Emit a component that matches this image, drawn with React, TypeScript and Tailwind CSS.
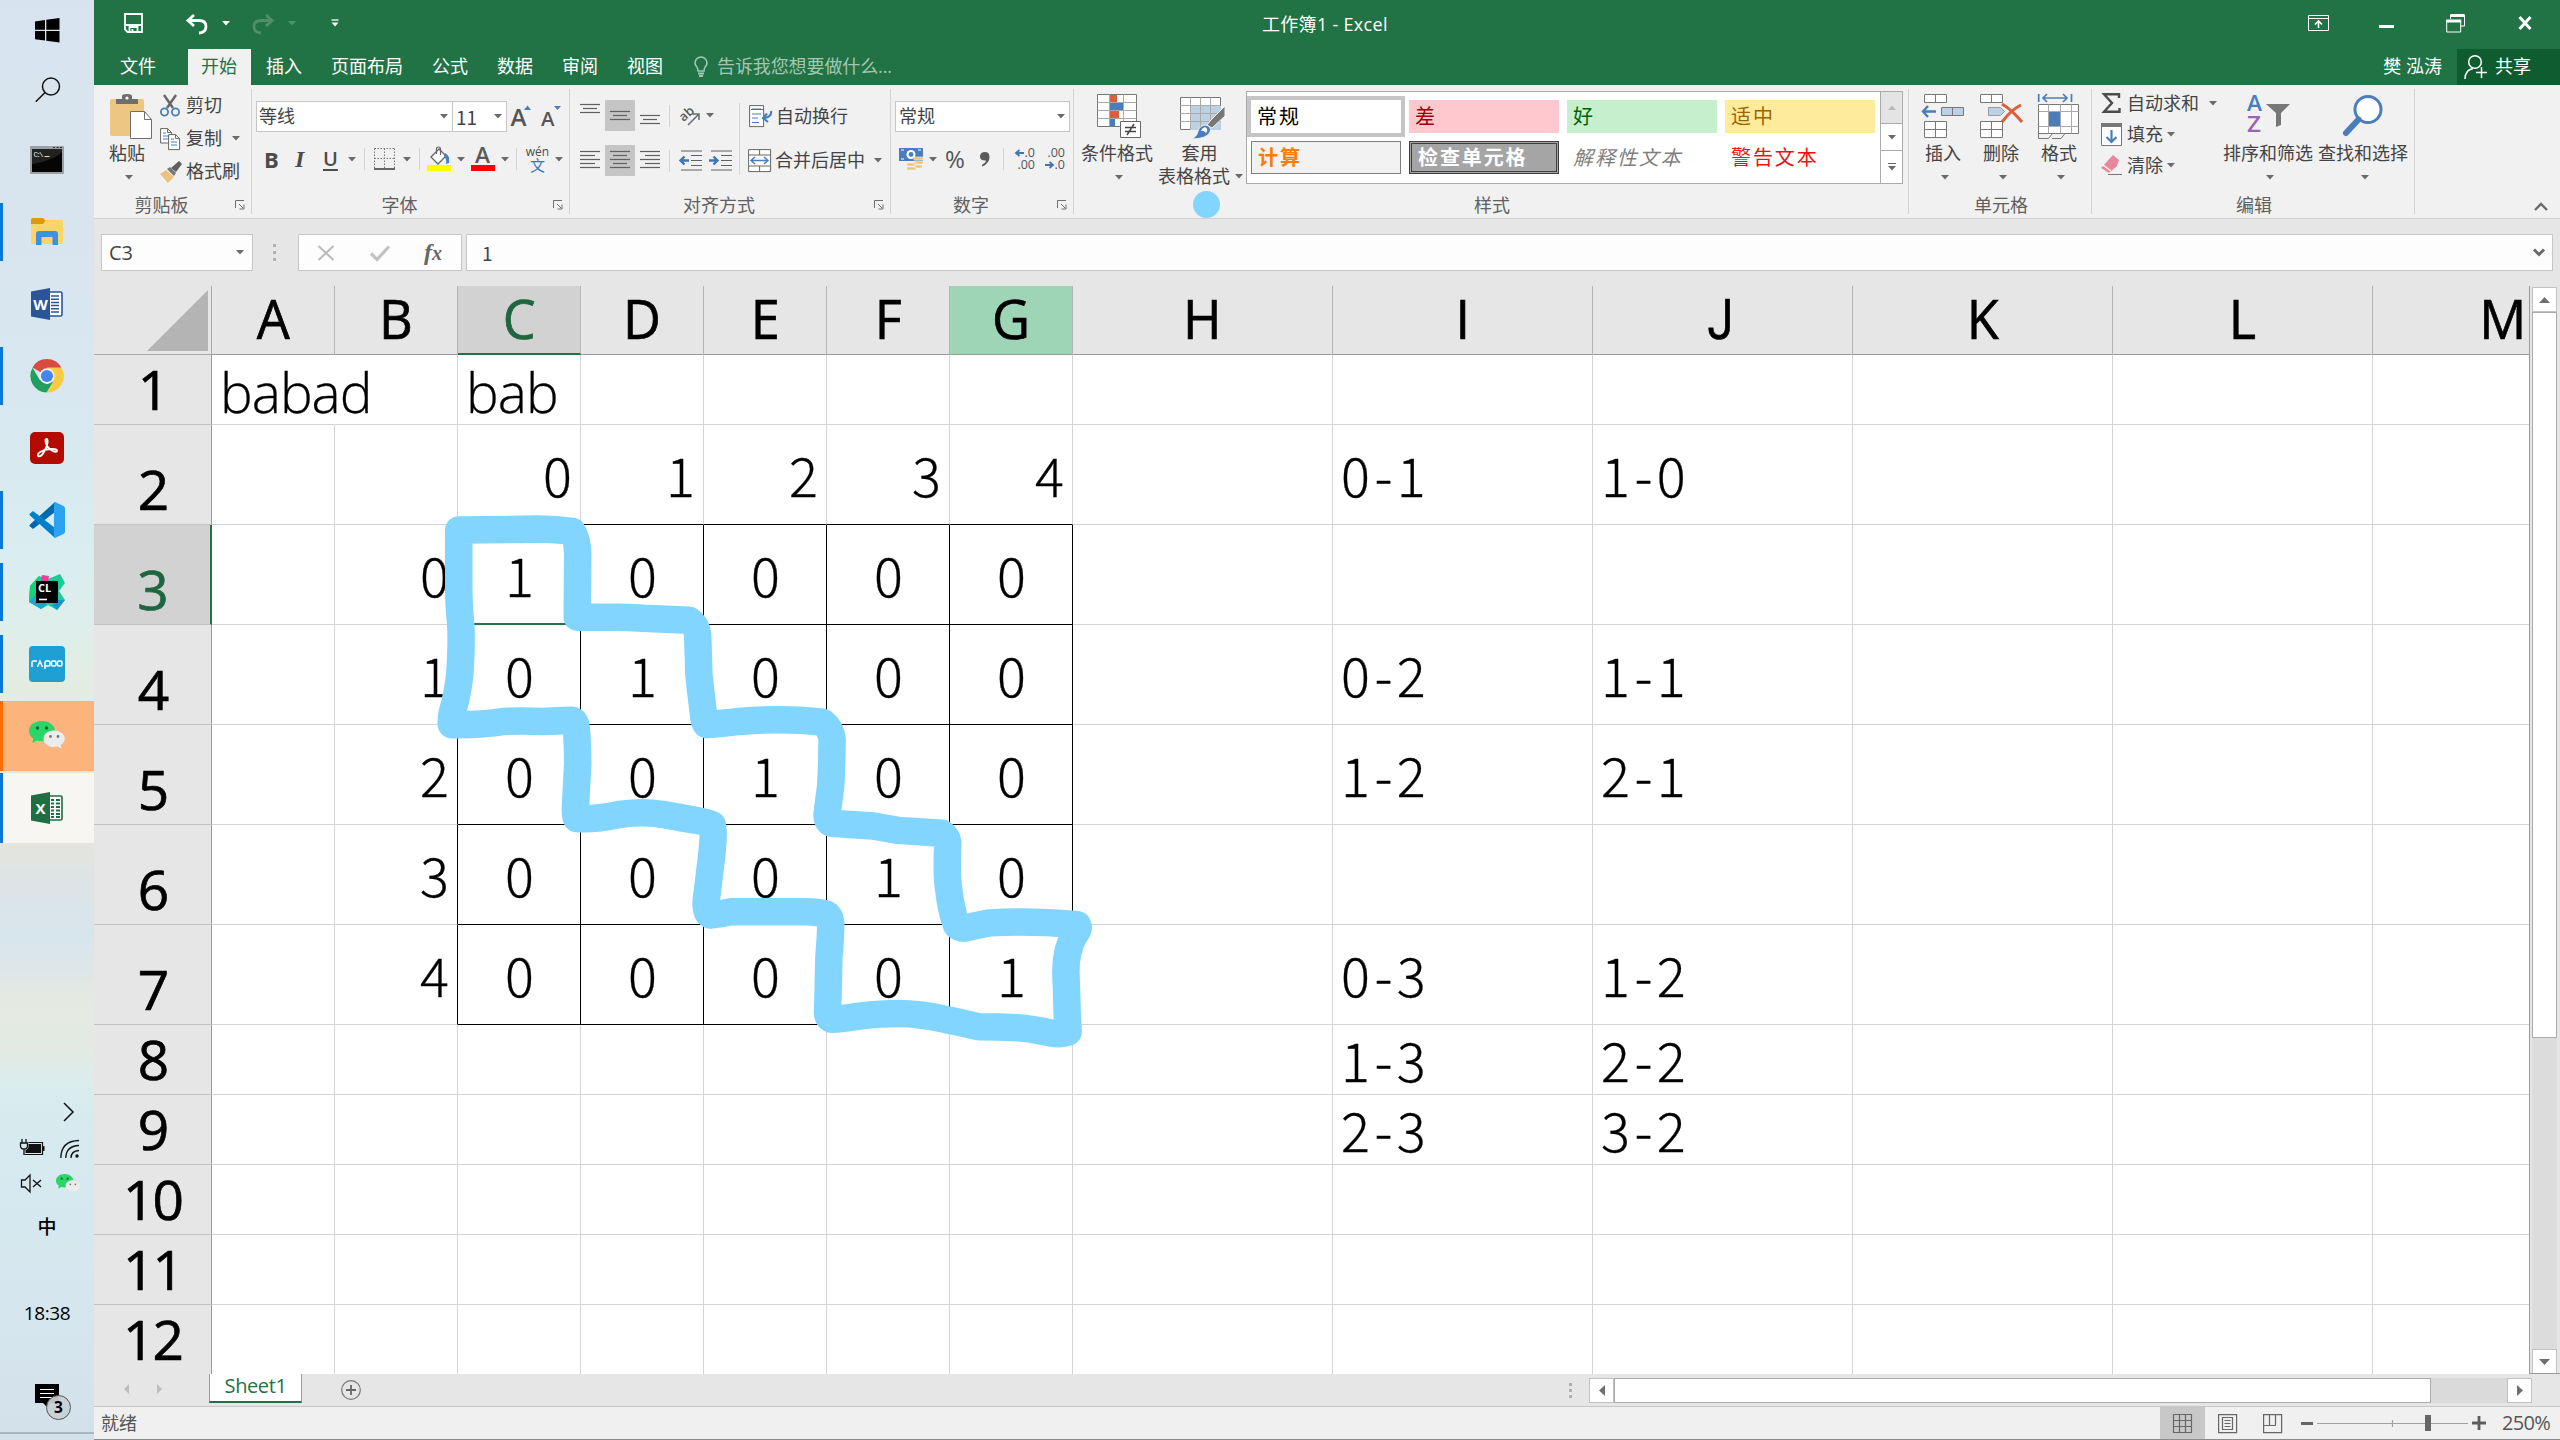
import React from "react";

type Kids = { children?: React.ReactNode; className?: string };

const Svg = ({ w, h, className = "", children }: { w: number; h: number } & Kids) => (
  <svg width={w} height={h} viewBox={`0 0 ${w} ${h}`} fill="none" className={`block shrink-0 overflow-visible ${className}`}>
    {children}
  </svg>
);

const Caret = ({ className = "", color = "#6a6a6a" }: { className?: string; color?: string }) => (
  <Svg w={8} h={5} className={className}>
    <path d="M0 0h8L4 4.6z" fill={color} />
  </Svg>
);

const Sep = ({ className = "" }: { className?: string }) => (
  <div className={`w-px shrink-0 bg-[#d4d4d4] ${className}`} />
);

const Launcher = () => (
  <Svg w={10} h={10}>
    <path d="M.5 8V.5H9M4 4l4 4M9 4.500V9H4.500" stroke="#6e6e6e" />
  </Svg>
);

function Group({ w, label, launcher, children }: { w: string; label: string; launcher?: boolean } & Kids) {
  return (
    <div className={`flex h-[133px] shrink-0 items-center ${w}`}>
      <div className="flex h-full min-w-0 grow flex-col">
        <div className="h-[107px]">{children}</div>
        <div className={`flex h-[26px] items-center text-[#606060] ${launcher ? "pr-[6px]" : ""}`}>
          <span className={`grow text-center leading-[25px] ${launcher ? "pr-[6px]" : "pl-[2px]"}`}>{label}</span>
          {launcher && <Launcher />}
        </div>
      </div>
      <div className="h-[125px] w-px bg-[#d2d2d2]" />
    </div>
  );
}

/* ---------- Task bar ---------- */

const WeChat = ({ w, h }: { w: number; h: number }) => (
  <svg width={w} height={h} viewBox="0 0 36 30" className="block shrink-0">
    <path d="M13 0C5.500 0 0 4.300 0 10c0 3.200 1.700 5.800 4.200 7.600L3.300 22l4.700-2.600c1.600.5 3.300.7 5 .7 7.200 0 13-4.300 13-10S20.500 0 13 0z" fill="#2bd568" />
    <path d="M25 9.500c-6 0-10.500 3.600-10.500 8.200S19 26 25 26c1.300 0 2.600-.2 3.800-.5l3.700 2.200-.8-3.700c2.500-1.500 4.100-3.700 4.100-6.300 0-4.600-4.800-8.200-10.800-8.200z" fill="#ececec" />
    <g fill="#0c6b33"><circle cx="8.500" cy="7" r="1.700" /><circle cx="17.500" cy="7" r="1.700" /></g>
    <g fill="#777"><circle cx="21.500" cy="15.500" r="1.400" /><circle cx="29" cy="15.500" r="1.400" /></g>
  </svg>
);

const Slot = ({ bar = "", bg = "", children }: { bar?: string; bg?: string } & Kids) => (
  <div className="flex h-[72px] w-[94px] shrink-0 items-center">
    <div className={`w-[3px] shrink-0 ${bg ? "h-[70px]" : "h-[58px]"} ${bar}`} />
    <div className={`flex h-[70px] grow items-center justify-center pr-[3px] ${bg}`}>{children}</div>
  </div>
);

const OfficeIcon = ({ letter, dark, light }: { letter: string; dark: string; light: string }) => (
  <Svg w={32} h={32}>
    <rect x="17" y="4" width="14" height="24" rx="1.500" fill="#fff" stroke={light} strokeWidth="1.600" />
    {letter === "W" ? (
      <path d="M20 8h8M20 11.200h8M20 14.400h8M20 17.600h8M20 20.800h8M20 24h8" stroke={light} strokeWidth="1.500" />
    ) : (
      <path d="M20 8h3M25 8h4M20 11.500h3M25 11.500h4M20 15h3M25 15h4M20 18.500h3M25 18.500h4M20 22h3M25 22h4M20 25h3M25 25h4" stroke={light} strokeWidth="2" />
    )}
    <path d="M0 3.500L19 0v32L0 28.500z" fill={dark} />
    <text x="9.500" y="21.500" textAnchor="middle" fontSize="15" fontWeight="700" fill="#fff" fontFamily="Open Sans, sans-serif">{letter}</text>
  </Svg>
);

function TaskBar() {
  return (
    <div className="flex h-[1440px] w-[94px] shrink-0 flex-col overflow-hidden bg-[linear-gradient(180deg,#d7e3ee_0px,#d9e5ee_200px,#d8e7f0_400px,#d9edf1_540px,#dfeee9_640px,#e4ece0_700px,#e4e4df_843px,#dce4e6_890px,#d6e5ed_935px,#e6e9e2_1005px,#e2eae3_1050px,#d9edee_1090px,#d6eaf0_1140px,#d6e6ee_1300px,#d2e0ea_1440px)]">
      <div className="h-[60px] pl-[35px] pt-[18px]">
        <Svg w={25} h={25}>
          <path d="M0 3.500L10 2v9.700H0zM11.300 1.800L24.500 0v11.700H11.300zM0 13h10v9.600L0 21.200zM11.300 13h13.200v11.500l-13.200-1.800z" fill="#000" />
        </Svg>
      </div>
      <div className="h-[64px] pl-[35px] pt-[17px]">
        <Svg w={26} h={26}>
          <circle cx="16" cy="9.500" r="8.500" stroke="#111" strokeWidth="1.500" />
          <path d="M10 15.500L.8 24.700" stroke="#111" strokeWidth="1.500" />
        </Svg>
      </div>
      <Slot>
        <Svg w={34} h={28}>
          <rect width="34" height="28" rx="1" fill="#9aa0a4" />
          <path d="M2 3h30v23H2z" fill="#050505" />
          <path d="M2 18C14 16 26 12 32 6V3H2z" fill="#222" />
          <path d="M23 1.500h2M26.500 1.500h2M30 1.500h2" stroke="#333" />
          <path d="M14.500 10.500h5" stroke="#ddd" />
          <text x="3.500" y="10.500" fontSize="7.500" fill="#e8e8e8" fontFamily="Liberation Mono, monospace" textLength="10">C:\</text>
        </Svg>
      </Slot>
      <Slot bar="bg-[#0b77d8]">
        <Svg w={32} h={28}>
          <path d="M0 2a2 2 0 012-2h10l3 3v3H0z" fill="#d99a0f" />
          <path d="M0 6h12l3-4h15a2 2 0 012 2v20a2 2 0 01-2 2H2a2 2 0 01-2-2z" fill="#fdd565" />
          <path d="M5 27V16a3 3 0 013-3h16a3 3 0 013 3v11h-5.500v-8h-11v8z" fill="#3b93d9" />
        </Svg>
      </Slot>
      <Slot><OfficeIcon letter="W" dark="#2a5699" light="#2a5699" /></Slot>
      <Slot bar="bg-[#0b77d8]">
        <Svg w={34} h={34}>
          <path d="M17 17L2.500 8.500A16.500 16.500 0 0131.400 8.700L17 8.700z" fill="#db4a3f" />
          <path d="M31.400 8.700A16.500 16.500 0 0116.500 33.500L24 21 17 8.700z" fill="#fcca3f" />
          <path d="M16.500 33.500A16.500 16.500 0 012.600 8.700L9.800 21 17 25l6.500-3z" fill="#1fa15d" />
          <circle cx="17" cy="17" r="7.700" fill="#f4f4f4" />
          <circle cx="17" cy="17" r="6.100" fill="#4684ee" />
        </Svg>
      </Slot>
      <Slot>
        <Svg w={34} h={33}>
          <rect width="34" height="32" rx="5" fill="#b30b00" />
          <path d="M8 22.500c0-2 5-4.300 10-5.200 5-.9 9.500 0 9 1.700-.6 2-6.500.1-9.500-4.500-2.200-3.400-2.600-7.500-1-7.600 2-.1 1.200 6-1.500 11.100-2 3.900-4.300 6.500-5.900 6.400-.7 0-1.100-.8-1.100-1.900z" stroke="#fff" strokeWidth="1.900" />
        </Svg>
      </Slot>
      <Slot bar="bg-[#0b77d8]">
        <Svg w={36} h={36}>
          <path d="M26 0v10L4 27l-3-2.500q-1-1 0-2z" fill="#0068ad" />
          <path d="M26 36V26L4 9l-3 2.500q-1 1 0 2z" fill="#0080cc" />
          <path d="M26 0l8.500 4q1.500.8 1.500 2.400v23.200q0 1.600-1.500 2.400L26 36l-1-1.500v-33z" fill="#2ba3f0" />
        </Svg>
      </Slot>
      <Slot bar="bg-[#0b77d8]">
        <Svg w={36} h={36}>
          <path d="M1 12l9-10 9 3 12-5 5 9-6 8 6 9-8 10-9-5-7 4L0 28z" fill="#20c997" />
          <path d="M1 12l9-10 2 18L0 28z" fill="#18d078" />
          <path d="M0 28l7-8 11 11-6 4z" fill="#18a5d8" />
          <path d="M13 1l7 1-1 6-7-1z" fill="#e83fa0" />
          <path d="M30 26l6 0-8 10-5-5z" fill="#0e9ad0" />
          <rect x="7" y="7" width="22" height="22" fill="#000" />
          <path d="M10 25.500h8" stroke="#fff" strokeWidth="1.600" />
          <text x="9" y="17.500" fontSize="11" fontWeight="700" fill="#fff" fontFamily="Open Sans, sans-serif">CL</text>
        </Svg>
      </Slot>
      <Slot bar="bg-[#0b77d8]">
        <div className="flex h-[36px] w-[36px] items-center justify-center rounded-[4px] bg-[#1fa0d3]">
          <svg width="32" height="12" viewBox="0 0 32 12" fill="none" stroke="#fff" strokeWidth="1.500">
            <path d="M1 9V4.500Q1 3 2.500 3H6M6.500 9L9 3.200 11.500 9M14 11V4.500Q14 3 15.500 3h2Q19 3 19 4.500v2Q19 8 17.500 8H14" />
            <rect x="20.500" y="3" width="4.500" height="5" rx="1.600" /><rect x="26.500" y="3" width="4.500" height="5" rx="1.600" />
          </svg>
        </div>
      </Slot>
      <Slot bar="bg-[#ff6d00]" bg="bg-[#fab47c]"><WeChat w={36} h={32} /></Slot>
      <Slot bar="bg-[#0b77d8]" bg="bg-[#f8f6f2]"><OfficeIcon letter="X" dark="#1e6e42" light="#1e6e42" /></Slot>
      <div className="mt-[258px] flex h-[20px] justify-end pr-[20px]">
        <Svg w={11} h={20}><path d="M1 1l9 9-9 9" stroke="#111" strokeWidth="1.500" /></Svg>
      </div>
      <div className="mt-[17px] flex h-[20px] gap-[15px] pl-[20px]">
        <Svg w={25} h={20}>
          <path d="M2 0v4M6 0v4M.5 4h7v3q0 3-3.500 3T.5 7zM4 10v6" stroke="#111" strokeWidth="1.300" />
          <path d="M8.500 3.500h14v12h-18" stroke="#111" strokeWidth="1.200" />
          <path d="M8.500 5H21v9H5.500v-3q3-1 3-4zM23 7h1.500v5H23z" fill="#111" />
        </Svg>
        <Svg w={20} h={20}>
          <path d="M.8 19Q1 2 19 1.500M5.800 19Q6 7 19 6.500M11 19Q11 12 19 11.500" stroke="#111" strokeWidth="1.300" />
          <circle cx="17" cy="17" r="1.700" fill="#111" />
        </Svg>
      </div>
      <div className="mt-[15px] flex h-[20px] gap-[14px] pl-[20px]">
        <Svg w={22} h={20}>
          <path d="M1.500 6H5l5-5v17l-5-5H1.500zM13 6l8 7M21 6l-8 7" stroke="#111" strokeWidth="1.300" />
        </Svg>
        <WeChat w={24} h={20} />
      </div>
      <div className="mt-[21px] h-[24px] text-center text-[19px] font-medium leading-[24px] text-black">中</div>
      <div className="mt-[62px] h-[24px] text-center text-[19px] leading-[24px] tracking-[-0.4px] text-black">18:38</div>
      <div className="mt-[59px] flex h-[40px] pl-[35px]">
        <Svg w={38} h={38}>
          <path d="M0 0h24v19H15l-2 5-5-5H0z" fill="#000" />
          <path d="M5 5.500h14M5 9.500h14M5 13.500h14" stroke="#fff" strokeWidth="1.200" />
          <circle cx="23.500" cy="23.500" r="12" fill="#c9d0d5" fillOpacity=".93" stroke="#555" />
          <text x="23.500" y="29" textAnchor="middle" fontSize="15.500" fontWeight="700" fill="#000" fontFamily="Open Sans, sans-serif">3</text>
        </Svg>
      </div>
      <div className="mt-[8px] h-[2px] bg-[#a9b6bf]" />
    </div>
  );
}

/* ---------- Title bar and tabs ---------- */

function TitleBar() {
  return (
    <div className="flex h-[49px] items-start text-white">
      <Svg w={19} h={20} className="ml-[30px] mt-[13px]">
        <path d="M1 1h17v18H3.500L1 16.500z" stroke="#fff" strokeWidth="1.800" />
        <path d="M1 12h17M5.500 19v-5h8v5M8.500 16v3" stroke="#fff" strokeWidth="1.800" />
      </Svg>
      <Svg w={22} h={20} className="ml-[43px] mt-[14px]">
        <path d="M8 1L2 6.500 8 12M2 6.500h11q7 0 7 6 0 6-7 6.500" stroke="#fff" strokeWidth="2.800" />
      </Svg>
      <Caret className="ml-[14px] mt-[21px]" color="#fff" />
      <Svg w={22} h={20} className="ml-[22px] mt-[14px]">
        <path d="M14 1l6 5.500L14 12M20 6.500H9q-7 0-7 6 0 6 7 6.500" stroke="#4f906b" strokeWidth="2.800" />
      </Svg>
      <Caret className="ml-[14px] mt-[21px]" color="#4f906b" />
      <Svg w={8} h={8} className="ml-[35px] mt-[19px]">
        <path d="M.500 1h7" stroke="#fff" strokeWidth="1.300" /><path d="M.500 3.500h7L4 7.500z" fill="#fff" />
      </Svg>
      <div className="ml-[923px] w-[128px] whitespace-nowrap text-[18px] leading-[49px] tracking-[0.3px]">工作簿1 - Excel</div>
      <Svg w={21} h={16} className="ml-[918px] mt-[15px]">
        <path d="M.5.500h20v15H.5zM.5 3.500h20" stroke="#fff" /><path d="M10.500 13V6M7 9.500L10.500 6 14 9.500" stroke="#fff" strokeWidth="1.600" />
      </Svg>
      <div className="ml-[50px] mt-[25px] h-[3px] w-[15px] bg-white" />
      <Svg w={20} h={19} className="ml-[52px] mt-[14px]">
        <path d="M4.500 5V1h14v11h-4" stroke="#fff" /><path d="M4.500 1.500h14" stroke="#fff" strokeWidth="3" />
        <path d="M.700 6.500h14V18H.7z" stroke="#fff" /><path d="M.2 7h15" stroke="#fff" strokeWidth="3" />
      </Svg>
      <Svg w={14} h={14} className="ml-[52px] mt-[16px]">
        <path d="M1.500 1l11 12M12.500 1l-11 12" stroke="#fff" strokeWidth="3" />
      </Svg>
    </div>
  );
}

function Tabs() {
  return (
    <div className="flex h-[36px] items-stretch whitespace-nowrap leading-[34px] text-white">
      <div className="w-[94px] pl-[26px]">文件</div>
      <div className="w-[63px] bg-[#f1f1f1] pl-[13px] text-[#217346]">开始</div>
      <div className="w-[65px] pl-[15px]">插入</div>
      <div className="w-[101px] pl-[15px]">页面布局</div>
      <div className="w-[65px] pl-[15px]">公式</div>
      <div className="w-[65px] pl-[15px]">数据</div>
      <div className="w-[65px] pl-[15px]">审阅</div>
      <div className="w-[65px] pl-[15px]">视图</div>
      <Svg w={14} h={22} className="ml-[17px] mt-[7px]">
        <path d="M4 15q0-3-1.500-4.500Q1 8.700 1 7a6 6 0 0112 0q0 1.700-1.500 3.500Q10 12 10 15z" stroke="#a3c7b2" strokeWidth="1.600" />
        <path d="M4 17.500h6M5 20h4" stroke="#a3c7b2" strokeWidth="2" />
      </Svg>
      <div className="ml-[9px] tracking-[-0.1px] text-[#a3c7b2]">告诉我您想要做什么...</div>
      <div className="ml-auto mr-[15px]">樊 泓涛</div>
      <div className="flex w-[103px] bg-[#0e5c2f] pl-[7px]">
        <Svg w={24} h={26} className="mt-[5px]">
          <circle cx="11" cy="8" r="6.300" stroke="#fff" strokeWidth="1.500" />
          <path d="M1 25q0-9 8-10.500M12 18.500h11M17.500 13v11" stroke="#fff" strokeWidth="1.500" />
        </Svg>
        <span className="ml-[7px]">共享</span>
      </div>
    </div>
  );
}

/* ---------- Ribbon ---------- */

const Lines = ({ rows, w = 20 }: { rows: [number, number][]; w?: number }) => (
  <Svg w={w} h={rows.length * 4 + (rows.length > 3 ? 1 : 0)}>
    {rows.map(([x, len], i) => (
      <path key={i} d={`M${x} ${i * 4 + 1.500}h${len}`} stroke="#606060" strokeWidth="1.200" />
    ))}
  </Svg>
);
const LEFT: [number, number][] = [[0, 20], [0, 15], [0, 20], [0, 15], [0, 20]];
const MID: [number, number][] = [[0, 20], [3, 14], [0, 20], [3, 14], [0, 20]];
const RIGHT: [number, number][] = [[0, 20], [5, 15], [0, 20], [5, 15], [0, 20]];
const THREE: [number, number][] = [[0, 20], [3, 14], [0, 20]];

function ClipboardGroup() {
  return (
    <Group w="w-[158px]" label="剪贴板" launcher>
      <div className="flex">
        <div className="flex w-[66px] flex-col items-center pt-[9px]">
          <Svg w={42} h={45} className="ml-[8px]">
            <rect y="5" width="34" height="37" rx="2" fill="#edc682" />
            <path d="M6 10V5h6V2q0-2 5-2t5 2v3h6v5z" fill="#6e6e6e" /><circle cx="17" cy="4" r="1.600" fill="#fff" />
            <path d="M20.500 17.500h14l7 8v19h-21z" fill="#fff" stroke="#6e6e6e" /><path d="M34.500 17.500v8h7" stroke="#6e6e6e" />
          </Svg>
          <div className="mt-[2px] leading-[24px]">粘贴</div>
          <Caret className="ml-[4px] mt-[10px]" />
        </div>
        <div className="flex flex-col pt-[4px]">
          <div className="flex h-[33px] items-center">
            <Svg w={20} h={22}>
              <path d="M4 0l9 13M16 0L7 13" stroke="#666" strokeWidth="2.400" />
              <circle cx="4.500" cy="17" r="3.600" stroke="#4a7ebb" strokeWidth="1.800" /><circle cx="15.500" cy="17" r="3.600" stroke="#4a7ebb" strokeWidth="1.800" />
            </Svg>
            <span className="ml-[6px]">剪切</span>
          </div>
          <div className="flex h-[33px] items-center">
            <Svg w={20} h={22}>
              <path d="M.600.600h7l4 4V15H.6z" fill="#fff" stroke="#666" /><path d="M7.600.600v4h4" stroke="#666" /><path d="M3 5h3M3 8h6M3 11h6" stroke="#4a7ebb" />
              <path d="M8.600 6.600h7l4 4v11h-11z" fill="#fff" stroke="#666" /><path d="M15.600 6.600v4h4" stroke="#666" /><path d="M11 11h3M11 14h6M11 17h6" stroke="#4a7ebb" />
            </Svg>
            <span className="ml-[6px]">复制</span>
            <Caret className="ml-[10px]" />
          </div>
          <div className="flex h-[33px] items-center">
            <Svg w={22} h={22}>
              <path d="M0 13l6-4 8 7-6 6z" fill="#edc27f" /><path d="M7 8l3-2 6 6-2 3z" fill="#777" /><path d="M11 7l8-7 3 3-6 8z" fill="#5f5f5f" />
            </Svg>
            <span className="ml-[4px]">格式刷</span>
          </div>
        </div>
      </div>
    </Group>
  );
}

function FontGroup() {
  return (
    <Group w="w-[318px]" label="字体" launcher>
      <div className="pl-[4px] pt-[16px]">
        <div className="flex h-[31px]">
          <div className="flex w-[197px] items-center border border-[#c6c6c6] bg-white pl-[2px] pr-[4px]">
            <span className="grow">等线</span><Caret />
          </div>
          <div className="-ml-px flex w-[55px] items-center border border-[#c6c6c6] bg-white pl-[3px] pr-[4px]">
            <span className="grow font-['Noto_Sans_CJK_SC'] text-[19px] leading-[26px]">11</span><Caret />
          </div>
          <Svg w={20} h={22} className="ml-[4px] mt-[4px]">
            <text x="-.500" y="21" fontSize="23" fontWeight="600" fill="#555" textLength="16" lengthAdjust="spacingAndGlyphs">A</text>
            <path d="M13 5h7l-3.500-4.500z" fill="#4a7ebb" />
          </Svg>
          <Svg w={20} h={22} className="ml-[10px] mt-[4px]">
            <text x="0" y="21" fontSize="19" fontWeight="600" fill="#555" textLength="13.500" lengthAdjust="spacingAndGlyphs">A</text>
            <path d="M13 1h7l-3.500 4z" fill="#4a7ebb" />
          </Svg>
        </div>
        <div className="mt-[10px] flex h-[34px] items-center text-[#4c4c4c]">
          <span className="w-[28px] pl-[8px] text-[22px] font-bold leading-[34px]">B</span>
          <span className="w-[28px] pl-[11px] font-['Liberation_Serif'] text-[24px] font-bold italic leading-[34px]">I</span>
          <span className="w-[32px] pl-[11px] text-[20px] font-semibold leading-[30px] underline underline-offset-[3px]">U</span>
          <Caret className="ml-[4px]" />
          <Sep className="ml-[8px] h-[22px]" />
          <Svg w={21} h={22} className="ml-[9px]">
            <path d="M.500.500h20M.5 10.500h20M.5.500v20M10.500.500v20M20.500.500v20" stroke="#777" strokeDasharray="1.500 1.500" fill="none" /><path d="M0 21h21" stroke="#444" strokeWidth="1.600" />
          </Svg>
          <Caret className="ml-[8px]" />
          <Sep className="ml-[8px] h-[22px]" />
          <Svg w={24} h={24} className="ml-[7px]">
            <path d="M4 10l8-8 7 7-8 8z" fill="#fff" stroke="#666" strokeWidth="1.300" /><path d="M9.500 7V2q0-2 2-2t2 2v6" stroke="#666" strokeWidth="1.200" />
            <path d="M18 6q5 2 4 10l-3 1q1-5-2-8z" fill="#4a7ebb" /><path d="M0 18h24v6H0z" fill="#ff0" />
          </Svg>
          <Caret className="ml-[6px]" />
          <Svg w={24} h={24} className="ml-[6px]">
            <text x="4" y="16" fontSize="22" fontWeight="600" fill="#5a5a5a" textLength="15" lengthAdjust="spacingAndGlyphs">A</text>
            <path d="M0 18h24v6H0z" fill="#f00" />
          </Svg>
          <Caret className="ml-[6px]" />
          <Sep className="ml-[7px] h-[22px]" />
          <div className="ml-[10px] flex w-[21px] flex-col items-center">
            <span className="text-[12px] font-medium leading-[12px]">wén</span>
            <span className="text-[15px] leading-[15px] text-[#3f74b5]">文</span>
          </div>
          <Caret className="ml-[7px]" />
        </div>
      </div>
    </Group>
  );
}

function AlignGroup() {
  return (
    <Group w="w-[321px]" label="对齐方式" launcher>
      <div className="flex pt-[15px]">
        <div className="flex w-[169px] flex-col pl-[10px]">
          <div className="flex h-[31px] items-center">
            <div className="mb-[14px]"><Lines rows={THREE} /></div>
            <div className="ml-[5px] flex h-[31px] w-[30px] items-center justify-center bg-[#c5c5c5]"><Lines rows={THREE} /></div>
            <div className="ml-[5px] mt-[9px]"><Lines rows={THREE} /></div>
            <Sep className="ml-[9px] h-[22px]" />
            <Svg w={20} h={20} className="ml-[10px]">
              <text x="0" y="13" fontSize="13" fontWeight="600" fill="#5a5a5a" transform="rotate(-42 6 10)">ab</text>
              <path d="M8 19L19 8M13 8h6v6" stroke="#6a6a6a" strokeWidth="1.500" />
            </Svg>
            <Caret className="ml-[6px]" />
          </div>
          <div className="mt-[14px] flex h-[31px] items-center">
            <Lines rows={LEFT} />
            <div className="ml-[5px] flex h-[31px] w-[30px] items-center justify-center bg-[#c5c5c5]"><Lines rows={MID} /></div>
            <div className="ml-[5px]"><Lines rows={RIGHT} /></div>
            <Sep className="ml-[9px] h-[22px]" />
            <Svg w={23} h={21} className="ml-[9px]">
              <path d="M2 1h21M12 5.500h11M12 10.500h11M12 15.500h11M2 20h21" stroke="#606060" strokeWidth="1.200" /><path d="M10 10.500H2M5.500 6.500l-4 4 4 4" stroke="#3f74b5" strokeWidth="2.400" />
            </Svg>
            <Svg w={23} h={21} className="ml-[7px]">
              <path d="M2 1h21M12 5.500h11M12 10.500h11M12 15.500h11M2 20h21" stroke="#606060" strokeWidth="1.200" /><path d="M0 10.500h8M4.500 6.500l4 4-4 4" stroke="#3f74b5" strokeWidth="2.400" />
            </Svg>
          </div>
        </div>
        <Sep className="mt-[3px] h-[72px]" />
        <div className="flex flex-col pl-[8px]">
          <div className="flex h-[33px] items-center">
            <Svg w={24} h={23} className="ml-px">
              <path d="M.600.600h14v21H.6z" fill="#fff" stroke="#666" /><path d="M3 4h9M3 9h9M3 13h6M3 17.500h7" stroke="#4a7ebb" strokeWidth="1.200" /><path d="M2 4.500h13" stroke="#666" />
              <path d="M22 6q1 6-7 7M18 8.500L14 13l5 4" stroke="#4a7ebb" strokeWidth="2.200" />
            </Svg>
            <span className="ml-[3px]">自动换行</span>
          </div>
          <div className="mt-[12px] flex h-[31px] items-center">
            <Svg w={24} h={23}>
              <path d="M.600.600h22v22H.6zM.6 6h22M.6 17h22M11.600.600V6M11.600 17v5" fill="#fff" stroke="#666" /><path d="M4 11.500h15M7 8l-4 3.500L7 15M16 8l4 3.500-4 3.500" stroke="#4a7ebb" strokeWidth="1.500" />
            </Svg>
            <span className="ml-[3px]">合并后居中</span>
            <Caret className="ml-[9px]" />
          </div>
        </div>
      </div>
    </Group>
  );
}

function NumberGroup() {
  return (
    <Group w="w-[183px]" label="数字" launcher>
      <div className="pl-[4px] pt-[16px]">
        <div className="flex h-[31px] w-[175px] items-center border border-[#c6c6c6] bg-white pl-[3px] pr-[4px]">
          <span className="grow">常规</span><Caret />
        </div>
        <div className="mt-[10px] flex h-[34px] items-center pl-[4px] text-[#555]">
          <Svg w={24} h={23}>
            <path d="M0 0h24v13H0z" fill="#4a7ebb" /><circle cx="12" cy="6.500" r="4.500" fill="#fff" /><circle cx="12" cy="6.500" r="2.400" fill="#4a7ebb" />
            <path d="M2 2h3M2 11h3M19 2h3" stroke="#fff" />
            <path d="M15 9h9v3h-9zM15 13h9v3h-9zM8 15h9v3H8zM8 19h9v3H8zM15 17h8v3h-8z" fill="#ecc27c" stroke="#f1f1f1" strokeWidth=".6" />
          </Svg>
          <Caret className="ml-[6px]" />
          <span className="ml-[8px] w-[22px] text-[24px] leading-[30px]">%</span>
          <Svg w={10} h={15} className="ml-[13px]">
            <path d="M5 0q4.500 0 4.500 5 0 6-7 9.500l-.7-1.500Q6 10.500 6 8.500 0 9 0 4.500 0 0 5 0z" fill="#5a5a5a" />
          </Svg>
          <Sep className="ml-[13px] h-[22px]" />
          <div className="ml-[8px] flex w-[23px] flex-col items-end text-[12.500px] leading-[12px]">
            <span className="flex items-center gap-px"><Svg w={9} h={8}><path d="M9 4H1M4.500 1L1 4l3.500 3" stroke="#3f74b5" strokeWidth="1.800" /></Svg>.0</span><span>.00</span>
          </div>
          <div className="ml-[7px] flex w-[23px] flex-col items-end text-[12.500px] leading-[12px]">
            <span>.00</span><span className="flex items-center gap-px"><Svg w={9} h={8}><path d="M0 4h8M4.500 1L8 4 4.500 7" stroke="#3f74b5" strokeWidth="1.800" /></Svg>.0</span>
          </div>
        </div>
      </div>
    </Group>
  );
}

const STYLES = [
  { t: "常规", c: "bg-white text-black outline-4 outline-[#c5c5c5]" },
  { t: "差", c: "bg-[#ffc7ce] text-[#9c0006]" },
  { t: "好", c: "bg-[#c6efce] text-[#006100]" },
  { t: "适中", c: "bg-[#ffeb9c] text-[#9c6500]" },
  { t: "计算", c: "border border-[#7f7f7f] bg-[#f2f2f2] pl-[5px] font-bold text-[#fa7d00]" },
  { t: "检查单元格", c: "border-[3px] border-double border-[#3f3f3f] bg-[#a5a5a5] pl-[2px] font-bold text-white" },
  { t: "解释性文本", c: "italic text-[#7f7f7f]" },
  { t: "警告文本", c: "text-[#ee1111]" },
];

function StyleGroup() {
  return (
    <Group w="w-[835px]" label="样式">
      <div className="flex">
        <div className="flex w-[84px] flex-col items-center whitespace-nowrap pt-[9px]">
          <Svg w={45} h={45} className="ml-[6px]">
            <path d="M.500.500h39v32H.5z" fill="#fff" stroke="#777" /><path d="M.5 8.500h39M.5 16.500h39M.5 24.500h39M12.500.500v32M26.500.500v32" stroke="#aaa" />
            <path d="M13 1h7v7h-7zM13 17h9v7h-9z" fill="#d9603f" /><path d="M13 9h13v7H13zM13 25h5v7h-5z" fill="#4a7ebb" />
            <path d="M23.500 27.500h20v16h-20z" fill="#fff" stroke="#666" /><path d="M28 33.500h11M28 37.500h11M37 30l-7 11" stroke="#444" strokeWidth="1.400" />
          </Svg>
          <div className="ml-[2px] mt-[2px] leading-[24px]">条件格式</div>
          <Caret className="ml-[6px] mt-[10px]" />
        </div>
        <div className="flex w-[84px] flex-col items-center whitespace-nowrap pt-[12px]">
          <Svg w={45} h={43} className="ml-[4px]">
            <path d="M.500.500h40v32H.5z" fill="#fff" stroke="#777" /><path d="M10 9h31v24H10z" fill="#bcd0e6" />
            <path d="M.5 8.500h40M.5 16.500h40M.5 24.500h40M10.500.500v32M20.500.500v32M30.500.500v32" stroke="#aaa" />
            <path d="M45 9v10L32 31l-5-3 4-5z" fill="#777" stroke="#f1f1f1" /><path d="M26 28q6 2 4 7-3 7-19 7 6-2 7-8 2-6 8-6z" fill="#4a7ebb" stroke="#f1f1f1" /><path d="M25 30q4 2 1 6-2-3-5-2 1-3 4-4z" fill="#fff" />
          </Svg>
          <div className="mr-[1px] mt-[1px] leading-[24px]">套用</div>
          <div className="flex items-center self-start leading-[22px]"><span>表格格式</span><Caret className="ml-[5px]" /></div>
        </div>
        <div className="ml-[4px] mt-[6px] flex h-[93px] w-[657px] border border-[#ababab] bg-white">
          <div className="grid w-[633px] grid-cols-[repeat(4,150px)] grid-rows-[33px_33px] gap-x-[8px] gap-y-[8px] pl-[4px] pt-[8px] text-[20px]">
            {STYLES.map((s) => (
              <div key={s.t} className={`flex items-center pl-[6px] tracking-[1.900px] ${s.c}`}><span>{s.t}</span></div>
            ))}
          </div>
          <div className="flex w-[22px] flex-col border-l border-[#ababab]">
            <div className="flex h-[31px] items-center justify-center bg-[#e4e4e4]"><Caret className="rotate-180" color="#b8b8b8" /></div>
            <div className="flex h-[28px] items-center justify-center border-y border-[#ababab]"><Caret /></div>
            <div className="flex grow flex-col items-center justify-center gap-[2px]"><div className="h-px w-[8px] bg-[#666]" /><Caret /></div>
          </div>
        </div>
      </div>
    </Group>
  );
}

const BigButton = ({ className, label, children }: { label: string } & Kids) => (
  <div className={`flex shrink-0 flex-col items-center whitespace-nowrap pt-[9px] ${className}`}>
    <div className="flex h-[45px] items-start">{children}</div>
    <div className="mt-[2px] leading-[24px]">{label}</div>
    <Caret className="ml-[4px] mt-[10px]" />
  </div>
);

function CellsGroup() {
  return (
    <Group w="w-[183px]" label="单元格">
      <div className="flex pl-[5px]">
        <BigButton className="w-[58px]" label="插入">
          <Svg w={44} h={44}>
            <path d="M3.500.500h22v8h-22zM14.500.500v8M3.500 27.500h22v16h-22zM14.500 27.500v16M3.500 35.500h22" fill="#fff" stroke="#777" />
            <path d="M20.500 13.500h22v8h-22zM31.500 13.500v8" fill="#bcd0e6" stroke="#777" /><path d="M15 17.500H2M7 12l-5 5.500L7 23" stroke="#4a7ebb" strokeWidth="2.400" />
          </Svg>
        </BigButton>
        <BigButton className="w-[58px]" label="删除">
          <Svg w={44} h={44}>
            <path d="M1.500.500h22v8h-22zM12.500.500v8M1.500 27.500h22v16h-22zM12.500 27.500v16M1.500 35.500h22" fill="#fff" stroke="#777" />
            <path d="M9.500 13.500h12l4 4-4 4h-12z" fill="#bcd0e6" stroke="#999" /><path d="M23 10q10 6 20 18M42 11Q32 16 23 28" stroke="#d9603f" strokeWidth="3" />
          </Svg>
        </BigButton>
        <BigButton className="w-[58px]" label="格式">
          <Svg w={42} h={45}>
            <path d="M.700 0v8M33.500 0v8M5 4h24M9 0L5 4l4 4M25 0l4 4-4 4" stroke="#4a7ebb" strokeWidth="1.700" />
            <path d="M.500 10.500h40v29H.5z" fill="#fff" stroke="#777" /><path d="M.5 17.500h40M.5 32.500h40M10.500 10.500v29M22.500 10.500v29M33.500 10.500v29" stroke="#aaa" />
            <path d="M11 18h11v14H11z" fill="#4a7ebb" /><path d="M.5 39.500v5h10l4-5M14 44.500h9l4-5" stroke="#777" />
          </Svg>
        </BigButton>
      </div>
    </Group>
  );
}

function EditGroup() {
  return (
    <Group w="w-[323px]" label="编辑">
      <div className="flex pl-[9px]">
        <div className="flex w-[121px] flex-col pt-[2px]">
          <div className="flex h-[32px] items-center">
            <Svg w={21} h={20} className="ml-[1px]"><path d="M17 5V1.200H2l8 8.800-8 8.800h15.500V15" stroke="#4c4c4c" strokeWidth="2.400" /></Svg>
            <span className="ml-[4px]">自动求和</span><Caret className="ml-[10px]" />
          </div>
          <div className="flex h-[30px] items-center">
            <Svg w={22} h={23}><path d="M.500.500h20v22H.5z" fill="#fff" stroke="#777" /><path d="M0 0h21v4H0z" fill="#777" /><path d="M10.500 7v12M5.500 14l5 5 5-5" stroke="#4a7ebb" strokeWidth="2.200" /></Svg>
            <span className="ml-[4px]">填充</span><Caret className="ml-[4px]" />
          </div>
          <div className="flex h-[32px] items-center">
            <Svg w={22} h={21}><path d="M12 0l6 5-2 6-8 7-8-5z" fill="#e8879b" /><path d="M2 10l8 6" stroke="#fff" strokeWidth="1.300" /><path d="M7 19.500h14" stroke="#777" /></Svg>
            <span className="ml-[4px]">清除</span><Caret className="ml-[4px]" />
          </div>
        </div>
        <BigButton className="w-[92px]" label="排序和筛选">
          <Svg w={43} h={40}>
            <text x="0" y="17" fontSize="22" fontWeight="600" fill="#4a7ebb" textLength="15" lengthAdjust="spacingAndGlyphs">A</text>
            <text x="0" y="38" fontSize="22" fontWeight="600" fill="#9b63b5" textLength="14" lengthAdjust="spacingAndGlyphs">Z</text>
            <path d="M19 10h24l-9 9v12l-5 2V19z" fill="#777" />
          </Svg>
        </BigButton>
        <BigButton className="ml-[3px] w-[92px]" label="查找和选择">
          <Svg w={42} h={42} className="mt-[1px]">
            <circle cx="26" cy="14.500" r="13" fill="#fff" stroke="#4a7ebb" strokeWidth="3" /><path d="M16.500 24.500L4 38" stroke="#4a7ebb" strokeWidth="6" strokeLinecap="round" />
          </Svg>
        </BigButton>
      </div>
    </Group>
  );
}

function FormulaBar() {
  return (
    <div className="flex h-[67px] border-t border-[#d2d2d2] pt-[15px]">
      <div className="ml-[7px] flex h-[37px] w-[152px] items-center border border-[#c6c6c6] bg-[#fdfdfd] pl-[7px] pr-[8px] text-[20px] text-[#444]">
        <span className="grow">C3</span><Caret />
      </div>
      <div className="ml-[20px] mt-[10px] flex flex-col gap-[4px]">
        <div className="size-[3px] bg-[#b0b0b0]" /><div className="size-[3px] bg-[#b0b0b0]" /><div className="size-[3px] bg-[#b0b0b0]" />
      </div>
      <div className="ml-[22px] flex h-[37px] w-[164px] items-center border border-[#c6c6c6] bg-[#fdfdfd]">
        <Svg w={18} h={16} className="ml-[18px]"><path d="M1.500 1l15 14M16.500 1l-15 14" stroke="#bdbdbd" strokeWidth="2.200" /></Svg>
        <Svg w={20} h={16} className="ml-[35px]"><path d="M1 8.500l6 6L19 1.500" stroke="#c2c2c2" strokeWidth="3.200" /></Svg>
        <span className="ml-[34px] font-['Liberation_Serif'] text-[24px] font-bold italic leading-[30px] text-[#666]">f<span className="text-[20px]">x</span></span>
      </div>
      <div className="ml-[4px] flex h-[37px] w-[2087px] items-center border border-[#c6c6c6] bg-[#fdfdfd] pl-[15px] pr-[7px] text-[19px] text-[#444]">
        <span className="grow font-['Noto_Sans_CJK_SC'] leading-[26px]">1</span>
        <Svg w={12} h={9}><path d="M1 1.500l5 5 5-5" stroke="#6a6a6a" strokeWidth="3" /></Svg>
      </div>
    </div>
  );
}

/* ---------- Sheet ---------- */

const COLS = "ABCDEFGHIJKLM".split("");
const colW = (i: number) => (i < 7 ? "w-[123px]" : "w-[260px]");
const DATA: Record<string, string> = {
  A1: "babad", C1: "bab", C2: "0", D2: "1", E2: "2", F2: "3", G2: "4",
  B3: "0", B4: "1", B5: "2", B6: "3", B7: "4",
  I2: "0-1", J2: "1-0", I4: "0-2", J4: "1-1", I5: "1-2", J5: "2-1",
  I7: "0-3", J7: "1-2", I8: "1-3", J8: "2-2", I9: "2-3", J9: "3-2",
};
const inMatrix = (c: number, r: number) => c >= 2 && c <= 6 && r >= 3 && r <= 7;

function Cell({ c, r }: { c: number; r: number }) {
  const tall = r >= 2 && r <= 7;
  const matrix = inMatrix(c, r);
  const text = matrix ? (c - 2 === r - 3 ? "1" : "0") : DATA[COLS[c] + r];
  const numeric = !!text && text.length === 1;
  const right = matrix || (c === 1 && r >= 3 && r <= 7) ? "border-r-black" : c === 0 && r === 1 ? "border-r-transparent" : "border-r-[#d4d4d4]";
  const bottom = c === 2 && r === 3 ? "border-b-2 border-b-[#217346]" : matrix || (r === 2 && c >= 2 && c <= 6) ? "border-b border-b-black" : "border-b border-b-[#d4d4d4]";
  const align = matrix ? "justify-center pl-px" : numeric ? "justify-end pr-[8px]" : "justify-start pl-[8px]";
  const type = r === 1
    ? "tracking-[-1px] leading-[73px]"
    : `font-['Noto_Sans_CJK_SC'] text-[54px] ${numeric ? "" : "tracking-[4.500px]"} ${tall ? "leading-[97px]" : "leading-[67px]"}`;
  return (
    <div className={`flex shrink-0 items-start border-r ${colW(c)} ${right} ${bottom} ${align}`}>
      <span className={`whitespace-nowrap [-webkit-text-stroke:0.3px] ${type}`}>{text}</span>
    </div>
  );
}

function Sheet() {
  const rows = Array.from({ length: 12 }, (_, i) => i + 1);
  return (
    <div className="relative h-[1088px] w-[2436px] overflow-hidden border-r border-[#9b9b9b] bg-white text-[55px] text-black">
      <div className="flex h-[69px] bg-[#e6e6e6]">
        <div className="w-[118px] shrink-0 border-b border-r border-[#a8a8a8]">
          <Svg w={114} h={66}><path d="M114 4v61H53z" fill="#b4b4b4" /></Svg>
        </div>
        {COLS.map((name, i) => (
          <div
            key={name}
            className={`shrink-0 border-r border-r-[#b5b5b5] text-center leading-[63px] ${colW(i)} ${
              i === 2 ? "border-b-2 border-b-[#217346] bg-[#d2d2d2] text-[#1e6640]" : i === 6 ? "border-b border-b-[#9b9b9b] bg-[#9fd5b7]" : "border-b border-b-[#9b9b9b]"
            }`}
          >
            <span className={`inline-block [-webkit-text-stroke:0.7px] ${name === "J" ? "scale-x-85 pr-[4px] font-['Roboto']" : "scale-x-95"}`}>{name}</span>
          </div>
        ))}
      </div>
      {rows.map((r) => (
        <div key={r} className={`flex ${r >= 2 && r <= 7 ? "h-[100px]" : "h-[70px]"}`}>
          <div className={`flex w-[118px] shrink-0 items-end justify-center border-b border-b-[#c3c3c3] ${r === 3 ? "border-r-2 border-r-[#217346] bg-[#d2d2d2] text-[#1e6640]" : "border-r border-r-[#9b9b9b] bg-[#e6e6e6]"}`}>
            <span className="leading-[70px] tracking-[-2px] [-webkit-text-stroke:0.7px]">{r}</span>
          </div>
          <div className="flex font-light">
            {COLS.map((_, c) => <Cell key={c} c={c} r={r} />)}
          </div>
        </div>
      ))}
      {/* Freehand marker outline drawn over the diagonal band */}
      <svg className="absolute left-[306px] top-[214px]" width="720" height="560" viewBox="0 0 1568 1568" preserveAspectRatio="none" fill="none">
        <path
          vectorEffect="non-scaling-stroke"
          stroke="#81d5ff"
          strokeWidth="27.500"
          strokeLinejoin="round"
          d="M128 84Q220 84 300 81Q340 82 375 88Q386 110 387 150L386 328L470 328Q500 328 530 331L630 337Q645 350 648 375Q650 440 651 490Q657 560 661 600Q662 625 668 629Q700 626 740 620Q835 610 920 622Q938 640 941 670Q940 760 938 800L930 880Q930 900 940 905L1030 913Q1060 920 1085 925L1180 933Q1192 945 1193 960Q1190 1040 1194 1080Q1200 1150 1212 1190Q1218 1199 1230 1199Q1260 1190 1285 1184Q1370 1178 1475 1189Q1480 1200 1470 1215Q1450 1260 1450 1320Q1452 1380 1453 1440L1455 1490Q1440 1497 1420 1493Q1390 1485 1360 1479Q1310 1475 1260 1475Q1230 1465 1190 1455Q1130 1438 1085 1438Q1050 1438 1000 1445Q960 1453 940 1454Q931 1450 931 1435Q933 1360 934 1280Q938 1220 938 1190Q938 1162 925 1158Q900 1152 880 1153L720 1153Q700 1160 675 1162Q665 1155 667 1120Q675 1040 680 980Q684 930 680 910Q670 902 640 896Q590 885 570 880Q528 872 480 880Q420 896 385 892Q381 885 382 860L387 740Q387 680 384 640Q382 620 375 617Q340 619 310 620Q260 618 225 620Q180 630 112 629Q110 620 114 595Q126 540 130 490Q135 400 132 345Q128 290 128 250Z"
        />
      </svg>
    </div>
  );
}

const VScroll = () => (
  <div className="ml-[2px] flex w-[25px] flex-col pt-px">
    <div className="flex h-[25px] shrink-0 items-center justify-center border border-[#c2c2c2] bg-white"><Svg w={11} h={6}><path d="M0 6h11L5.500 0z" fill="#6e6e6e" /></Svg></div>
    <div className="h-[726px] shrink-0 border border-[#ababab] bg-white" />
    <div className="grow bg-[#dcdcdc]" />
    <div className="flex h-[25px] shrink-0 items-center justify-center border border-[#c2c2c2] bg-white"><Svg w={11} h={6}><path d="M0 0h11L5.500 6z" fill="#6e6e6e" /></Svg></div>
  </div>
);

function SheetTabs() {
  return (
    <div className="-mt-px flex h-[33px]">
      <div className="flex h-full w-[1476px] border-t border-[#9b9b9b]">
        <Svg w={5} h={10} className="ml-[30px] mt-[10px]"><path d="M5 0v10L0 5z" fill="#bdbdbd" /></Svg>
        <Svg w={5} h={10} className="ml-[28px] mt-[10px]"><path d="M0 0v10l5-5z" fill="#bdbdbd" /></Svg>
        <div className="-mt-px ml-[47px] h-[30px] w-[93px] border-x border-b-2 border-x-[#9b9b9b] border-b-[#217346] bg-white text-center text-[20px] leading-[25px] tracking-[-0.400px] text-[#217346]">Sheet1</div>
        <Svg w={20} h={20} className="ml-[39px] mt-[6px]">
          <circle cx="10" cy="10" r="9.300" stroke="#777" strokeWidth="1.200" /><path d="M10 5v10M5 10h10" stroke="#666" strokeWidth="1.800" />
        </Svg>
      </div>
      <div className="flex grow items-center border-t border-[#9b9b9b]">
        <div className="-ml-px flex flex-col gap-[3px]">
          <div className="size-[3px] bg-[#b0b0b0]" /><div className="size-[3px] bg-[#b0b0b0]" /><div className="size-[3px] bg-[#b0b0b0]" />
        </div>
        <div className="ml-[17px] flex h-[25px] w-[25px] items-center justify-center border border-[#c2c2c2] bg-white"><Svg w={6} h={11}><path d="M6 0v11L0 5.500z" fill="#6e6e6e" /></Svg></div>
        <div className="h-[25px] w-[817px] border border-[#ababab] bg-white" />
        <div className="h-[25px] w-[76px] bg-[#dadada]" />
        <div className="flex h-[25px] w-[25px] items-center justify-center border border-[#c2c2c2] bg-white"><Svg w={6} h={11}><path d="M0 0v11l6-5.500z" fill="#6e6e6e" /></Svg></div>
      </div>
    </div>
  );
}

function StatusBar() {
  return (
    <div className="flex h-[34px] items-center border-b border-t border-b-[#8c8c8c] border-t-[#c6c6c6] bg-[#f0f0f0] text-[#555]">
      <span className="ml-[7px] w-[2059px] leading-[28px]">就绪</span>
      <div className="flex h-full w-[45px] items-center justify-center bg-[#c8c8c8]">
        <Svg w={19} h={19}><path d="M.500.500h18v18H.5zM.5 6.500h18M.5 12.500h18M6.500.500v18M12.500.500v18" stroke="#666" strokeWidth="1.200" /></Svg>
      </div>
      <Svg w={19} h={19} className="ml-[13px]"><path d="M.600.600h18v18H.6zM4.500 3.500h10v12h-10z" stroke="#666" strokeWidth="1.200" /><path d="M6.500 6.500h6M6.500 9.500h6M6.500 12.500h6" stroke="#666" /></Svg>
      <Svg w={19} h={19} className="ml-[26px]"><path d="M.600.600h18v18H.6zM6.500.600v11M12.500.600v11M.6 11.500h12" stroke="#666" strokeWidth="1.200" /></Svg>
      <div className="ml-[19px] h-[3px] w-[12px] bg-[#666]" />
      <Svg w={151} h={18} className="ml-[4px]"><path d="M0 9.500h151M75.500 6v7" stroke="#a0a0a0" strokeWidth="1.200" /><path d="M108 1h6v16h-6z" fill="#666" /></Svg>
      <Svg w={14} h={14} className="ml-[4px]"><path d="M7 0v14M0 7h14" stroke="#5e5e5e" strokeWidth="2.800" /></Svg>
      <span className="ml-[16px] text-[20px] leading-[30px] tracking-[-0.700px]">250%</span>
    </div>
  );
}

export default function App() {
  return (
    <div className="relative flex h-[1440px] w-[2560px] overflow-hidden bg-[#e6e6e6] font-['Open_Sans','Noto_Sans_CJK_SC',sans-serif] text-[18px] text-[#444]">
      <TaskBar />
      <div className="flex w-[2466px] flex-col">
        <div className="h-[85px] bg-[#217346]">
          <TitleBar />
          <Tabs />
        </div>
        <div className="flex h-[133px] bg-[#f1f1f1]">
          <ClipboardGroup />
          <FontGroup />
          <AlignGroup />
          <NumberGroup />
          <StyleGroup />
          <CellsGroup />
          <EditGroup />
          <Svg w={14} h={9} className="ml-auto mr-[12px] mt-[117px]"><path d="M1 8l6-6 6 6" stroke="#6a6a6a" strokeWidth="2.400" /></Svg>
        </div>
        <FormulaBar />
        <div className="flex h-[1089px] pt-px">
          <Sheet />
          <VScroll />
        </div>
        <SheetTabs />
        <StatusBar />
      </div>
      {/* Marker pen cursor */}
      <div className="absolute left-[1193px] top-[191px] size-[27px] rounded-full bg-[#81d5ff]" />
    </div>
  );
}
